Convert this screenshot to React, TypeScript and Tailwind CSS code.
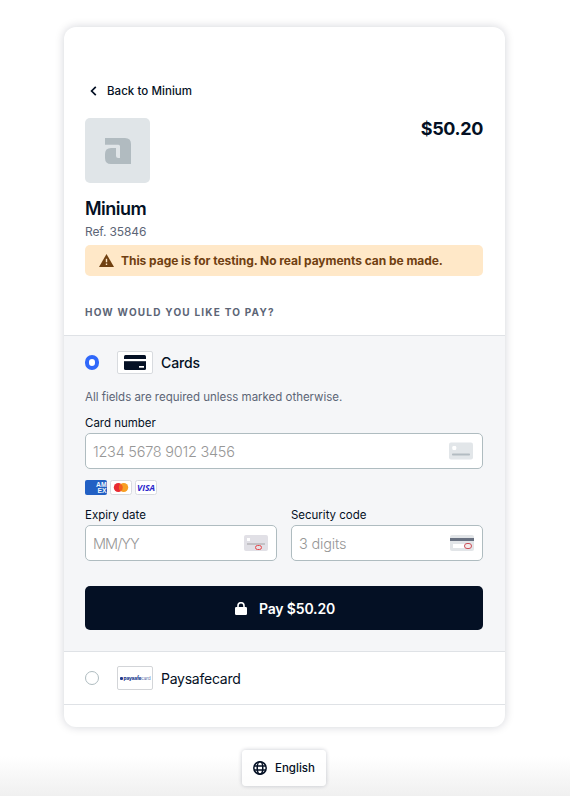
import type { ReactNode } from "react";

function Label({ children }: { children: ReactNode }) {
  return <div className="h-4 text-[11.5px] leading-4 tracking-[-0.02px] whitespace-nowrap">{children}</div>;
}

function Field({ children, icon }: { children: ReactNode; icon: ReactNode }) {
  return (
    <div className="mt-0.5 flex h-9 items-center justify-between rounded-[5px] border border-[#afbcc0] bg-white pr-[8px] pl-[7px]">
      <span className="pt-px text-[14.5px] font-light text-[#979797]">{children}</span>
      {icon}
    </div>
  );
}

function NumberIcon() {
  return (
    <svg width="26" height="18" viewBox="0 0 26 18">
      <rect x="1" y="0.5" width="24" height="17" rx="2" fill="#e2e6e9" />
      <rect x="4.3" y="4" width="4" height="4" rx="1.3" fill="#fff" />
      <rect x="4" y="11.5" width="18" height="2" rx="0.8" fill="#b3bcc2" />
    </svg>
  );
}

function ExpiryIcon() {
  return (
    <svg width="24" height="16" viewBox="0 0 24 16">
      <rect width="24" height="16" rx="2" fill="#e1e0e6" />
      <rect x="3" y="3" width="3" height="3" fill="#fff" />
      <rect x="3" y="8" width="18" height="2" fill="#c2c1c5" />
      <rect x="11.5" y="10.5" width="6" height="4" rx="2" fill="#e5dfe4" stroke="#e5484d" />
    </svg>
  );
}

function SecurityIcon() {
  return (
    <svg width="24" height="16" viewBox="0 0 24 16">
      <rect width="24" height="16" rx="2" fill="#e2e5e8" />
      <rect y="3" width="24" height="3" fill="#687080" />
      <rect x="3" y="9" width="12" height="4" fill="#fff" />
      <rect x="14.5" y="8.5" width="7" height="5" rx="2.5" fill="#f4e9ea" stroke="#cb5058" />
    </svg>
  );
}

export default function App() {
  return (
    <div className="flex h-[796px] w-full flex-col items-center bg-linear-to-b from-white from-[95%] to-[#f0f0f0] pt-[27px] pr-px font-['Inter','Liberation_Sans',sans-serif] text-[#041024]">
      <main className="flex h-[700px] w-[441px] flex-col overflow-hidden rounded-[12px] bg-white shadow-[0_0_10px_rgba(0,17,44,0.18)]">
        <header className="h-[308px] pt-[54px] pr-[22px] pl-[21px]">
          <div className="flex h-5 items-center pl-[5px] text-[11.5px] leading-4 font-medium tracking-[0.05px]">
            <svg width="7" height="10" viewBox="0 0 7 10" fill="none" stroke="currentColor" strokeWidth="1.7">
              <path d="M5.8 0.8 1.6 5l4.2 4.2" />
            </svg>
            <span className="ml-[10px]">Back to Minium</span>
          </div>
          <div className="mt-[17px] flex h-[65px] items-start justify-between">
            <div className="flex size-[65px] items-center justify-center rounded-[5px] bg-[#e0e5e8]">
              <svg width="26" height="26" viewBox="0 0 26 26" fill="#b1bbc0">
                <path d="M0 0h20q6 0 6 6v20H6q-6 0-6-6v-4q0-6 6-6h5v8q0 2 2.2 2H15V8.3Q15 6.7 13.4 6.7H0Z" />
              </svg>
            </div>
            <div className="text-[18px] leading-[22px] font-bold tracking-[-0.35px]">$50.20</div>
          </div>
          <h1 className="mt-[14px] h-6 text-[18px] leading-6 font-semibold tracking-[-0.5px]">Minium</h1>
          <div className="mt-[3px] h-4 text-[12px] leading-4 tracking-[-0.12px] text-[#5c6576]">Ref. 35846</div>
          <div className="mt-[5px] flex h-[31px] items-center rounded-[5px] bg-[#ffe8c8] pl-[14px] text-[#704011]">
            <svg width="15" height="13" viewBox="0 0 15 13" fill="currentColor">
              <path d="M7.5 0 15 13H0Z" />
              <path d="M7.5 4.8v3.4M7.5 9.5v1.5" stroke="#ffe8c8" strokeWidth="1.4" />
            </svg>
            <span className="ml-[7px] text-[12px] font-bold tracking-[-0.045px]">This page is for testing. No real payments can be made.</span>
          </div>
          <h2 className="mt-[28px] text-[10px] leading-4 font-bold tracking-[1.22px] text-[#5c6576]">HOW WOULD YOU LIKE TO PAY?</h2>
        </header>

        <section className="h-[316px] border-t border-[#dfe2e6] bg-[#f5f6f8] pt-[15px] pr-[22px] pl-[21px]">
          <div className="flex h-[23px] items-center">
            <span className="h-[15px] w-[14px] rounded-full border-[4.5px] border-[#3068fa] bg-white" />
            <span className="ml-[18px] flex h-[23px] w-9 items-center justify-center rounded-[2px] border border-[#d8dbdf] bg-white">
              <svg width="22" height="15" viewBox="0 0 22 15">
                <rect width="22" height="15" rx="1.5" fill="#041024" />
                <path d="M0 4h22v2.2H0Z" fill="#fff" />
                <rect x="15" y="11" width="5" height="1.7" fill="#fff" />
              </svg>
            </span>
            <span className="ml-2 text-[14px] font-medium tracking-[-0.1px]">Cards</span>
          </div>
          <p className="mt-[15px] h-4 text-[11.5px] leading-4 tracking-[-0.02px] text-[#5c6576]">All fields are required unless marked otherwise.</p>
          <div className="mt-[10px]">
            <Label>Card number</Label>
            <Field icon={<NumberIcon />}>
              <span className="tracking-[-0.25px]">1234 5678 9012 3456</span>
            </Field>
          </div>
          <div className="mt-[11px] flex h-[15px] gap-[3px]">
            <svg width="22" height="15" viewBox="0 0 22 15">
              <rect width="22" height="15" rx="2" fill="#2260c4" />
              <g fill="#eef4fc" fontFamily="Liberation Sans, sans-serif" fontWeight="700" fontSize="6.5">
                <text x="11" y="7.3" textLength="10.5" lengthAdjust="spacingAndGlyphs">AM</text>
                <text x="12.5" y="12.8" textLength="9" lengthAdjust="spacingAndGlyphs">EX</text>
              </g>
            </svg>
            <svg width="22" height="15" viewBox="0 0 22 15">
              <rect x="0.5" y="0.5" width="21" height="14" rx="2" fill="#fff" stroke="#d8dbe0" />
              <circle cx="8.3" cy="7.5" r="4.5" fill="#e92b32" />
              <circle cx="13.7" cy="7.5" r="4.5" fill="#f79f24" />
              <path d="M11 3.9a4.5 4.5 0 0 1 0 7.2 4.5 4.5 0 0 1 0-7.2Z" fill="#f15d22" />
            </svg>
            <svg width="22" height="15" viewBox="0 0 22 15">
              <rect x="0.5" y="0.5" width="21" height="14" rx="2" fill="#fff" stroke="#d8dbe0" />
              <text x="2" y="10.5" fill="#2a26cc" fontFamily="Open Sans, sans-serif" fontStyle="italic" fontWeight="700" fontSize="8.5" textLength="18" lengthAdjust="spacingAndGlyphs">VISA</text>
            </svg>
          </div>
          <div className="mt-3 grid grid-cols-2 gap-[14px]">
            <div>
              <Label>Expiry date</Label>
              <Field icon={<ExpiryIcon />}>
                <span className="tracking-[-0.95px]">MM/YY</span>
              </Field>
            </div>
            <div>
              <Label>Security code</Label>
              <Field icon={<SecurityIcon />}>
                <span className="tracking-[-0.2px]">3 digits</span>
              </Field>
            </div>
          </div>
          <button className="mt-[25px] flex h-11 w-full items-center justify-center rounded-[5px] bg-[#041024] pl-[2px] text-[14px] font-semibold tracking-[-0.15px] text-white">
            <svg width="12" height="13" viewBox="0 0 12 13" fill="none">
              <path d="M3 6V3.7a3 3 0 0 1 6 0V6" stroke="currentColor" strokeWidth="1.6" />
              <rect y="5" width="12" height="8" rx="1.2" fill="currentColor" />
            </svg>
            <span className="ml-3">Pay $50.20</span>
          </button>
        </section>

        <section className="flex h-[54px] items-center border-y border-[#dfe2e6] px-[21px]">
          <span className="size-[14px] rounded-full border border-[#afbcc0] bg-white" />
          <span className="ml-[18px] flex h-6 w-9 items-center justify-center rounded-[2px] border border-[#d3d5d8] text-[4.8px] leading-[8px] tracking-[-0.2px] text-[#203b8f]">
            <span className="mr-px h-[3px] w-[3px] rounded-[1px] bg-[#203b8f]" />
            <span className="pb-px">
              <b className="font-extrabold">paysafe</b>
              <span className="font-light">card</span>
            </span>
          </span>
          <span className="ml-2 text-[14px] tracking-[-0.25px]">Paysafecard</span>
        </section>
      </main>

      <button className="mt-[23px] mr-px flex h-9 w-[84px] shrink-0 items-center rounded-[4px] bg-white/80 pl-[11px] text-[11.5px] leading-4 font-medium shadow-[0_0_4px_rgba(0,17,44,0.22)]">
        <svg width="14" height="14" viewBox="0 0 14 14" fill="none" stroke="currentColor" strokeWidth="1.5">
          <circle cx="7" cy="7" r="6.2" />
          <ellipse cx="7" cy="7" rx="2.8" ry="6.2" />
          <path d="M1 5h12M1 9h12" />
        </svg>
        <span className="ml-2">English</span>
      </button>
    </div>
  );
}
